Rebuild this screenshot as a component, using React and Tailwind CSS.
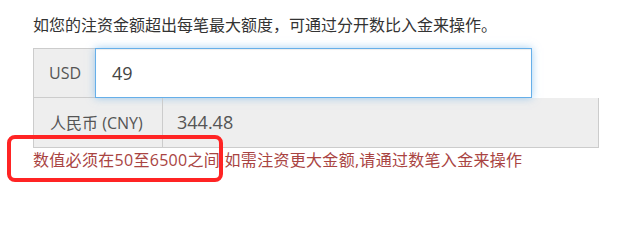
export default function App() {
  return (
    <div className="relative w-[643px] h-[200px] bg-white overflow-hidden font-['Open_Sans','Noto_Sans_CJK_SC',sans-serif]">
      <div className="pl-[33px] pt-[13px]">
        <p className="text-[16px] leading-[24px] text-[#333]">
          如您的注资金额超出每笔最大额度，可通过分开数比入金来操作。
        </p>
        <div className="mt-[11px] flex h-[50px] w-[499px]">
          <div className="flex w-[62px] items-center border border-r-0 border-[#ccc] bg-[#eee] pl-[15px] text-[16px] text-[#555]">
            USD
          </div>
          <div className="flex w-[437px] items-center border border-[#66afe9] bg-white pl-[16px] text-[18px] text-[#444] shadow-[inset_0_1px_1px_rgba(0,0,0,0.075),0_0_8px_rgba(102,175,233,0.6)]">
            49
          </div>
        </div>
        <div className="flex h-[50px] w-[566px] border border-t-0 border-[#ccc] bg-[#eee]">
          <div className="flex w-[129px] items-center border-r border-[#ccc] pl-[16px] text-[16px] text-[#555]">
            人民币 (CNY)
          </div>
          <div className="flex flex-1 items-center pl-[14px] text-[18px] text-[#555]">
            344.48
          </div>
        </div>
        <p className="text-[16px] leading-[24px] tracking-[0.3px] text-[#a94442]">
          数值必须在50至6500之间,如需注资更大金额,请通过数笔入金来操作
        </p>
      </div>
      <div className="absolute left-[7px] top-[135px] h-[47px] w-[216px] rounded-[8px] border-[4px] border-[#ff2424]" />
    </div>
  );
}
